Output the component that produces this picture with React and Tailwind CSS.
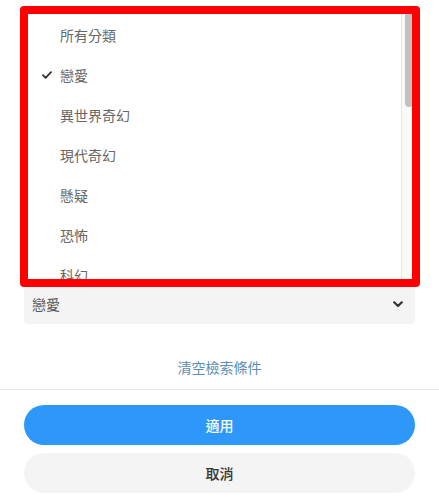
import React from "react";

const items = ["所有分類", "戀愛", "異世界奇幻", "現代奇幻", "懸疑", "恐怖", "科幻"];

export default function App() {
  return (
    <div
      className="relative w-[439px] h-[504px] bg-white overflow-hidden"
      style={{ fontFamily: '"Noto Sans CJK TC", "Noto Sans", sans-serif' }}
    >
      <div className="px-[24px] pt-[284px]">
        <div className="h-[40px] rounded-[4px] bg-[#f4f4f4] flex items-center justify-between pl-[8px] pr-[12px]">
          <span className="text-[14px] text-[#555]">戀愛</span>
          <svg width="10" height="7" viewBox="0 0 10 7" fill="none">
            <path d="M1.2 1.3 L5 5 L8.8 1.3" stroke="#333" strokeWidth="2.2" strokeLinecap="round" strokeLinejoin="round" />
          </svg>
        </div>
        <div className="mt-[33px] text-center text-[14px] leading-[20px] text-[#5b8db5]">清空檢索條件</div>
      </div>
      <div className="mt-[12px] h-px bg-[#e8e8e8]" />
      <div className="px-[24px] pt-[15px] flex flex-col gap-[8px]">
        <button className="h-[40px] rounded-full bg-[#2d98fa] text-white text-[14px] font-medium">適用</button>
        <button className="h-[40px] rounded-full bg-[#f4f4f4] text-[#333] text-[14px] font-medium">取消</button>
      </div>

      {/* dropdown list */}
      <div className="absolute left-[24px] top-[10px] w-[392px] h-[273px] bg-white overflow-hidden">
        <div className="pt-[5px] pr-[15px]">
          {items.map((t, i) => (
            <div key={t} className="h-[40px] flex items-center">
              <div className="w-[36px] flex justify-end pr-[8px]">
                {i === 1 && (
                  <svg width="10" height="8" viewBox="0 0 10 8" fill="none">
                    <path d="M1 4.2 L3.6 6.8 L9 1.2" stroke="#333" strokeWidth="1.8" strokeLinecap="round" strokeLinejoin="round" />
                  </svg>
                )}
              </div>
              <span className="text-[14px] text-[#666]">{t}</span>
            </div>
          ))}
        </div>
        <div className="absolute right-0 top-0 bottom-0 w-[15px] bg-[#fafafa] border-l border-[#e6e6e6]">
          <div className="absolute left-[3px] top-0 w-[8px] h-[97px] rounded-b-[4px] bg-[#c1c1c1]" />
        </div>
      </div>

      {/* highlight */}
      <div className="absolute left-[20px] top-[6px] w-[400px] h-[281px] border-[8px] border-[#ff0000] rounded-[4px] pointer-events-none" />
    </div>
  );
}
